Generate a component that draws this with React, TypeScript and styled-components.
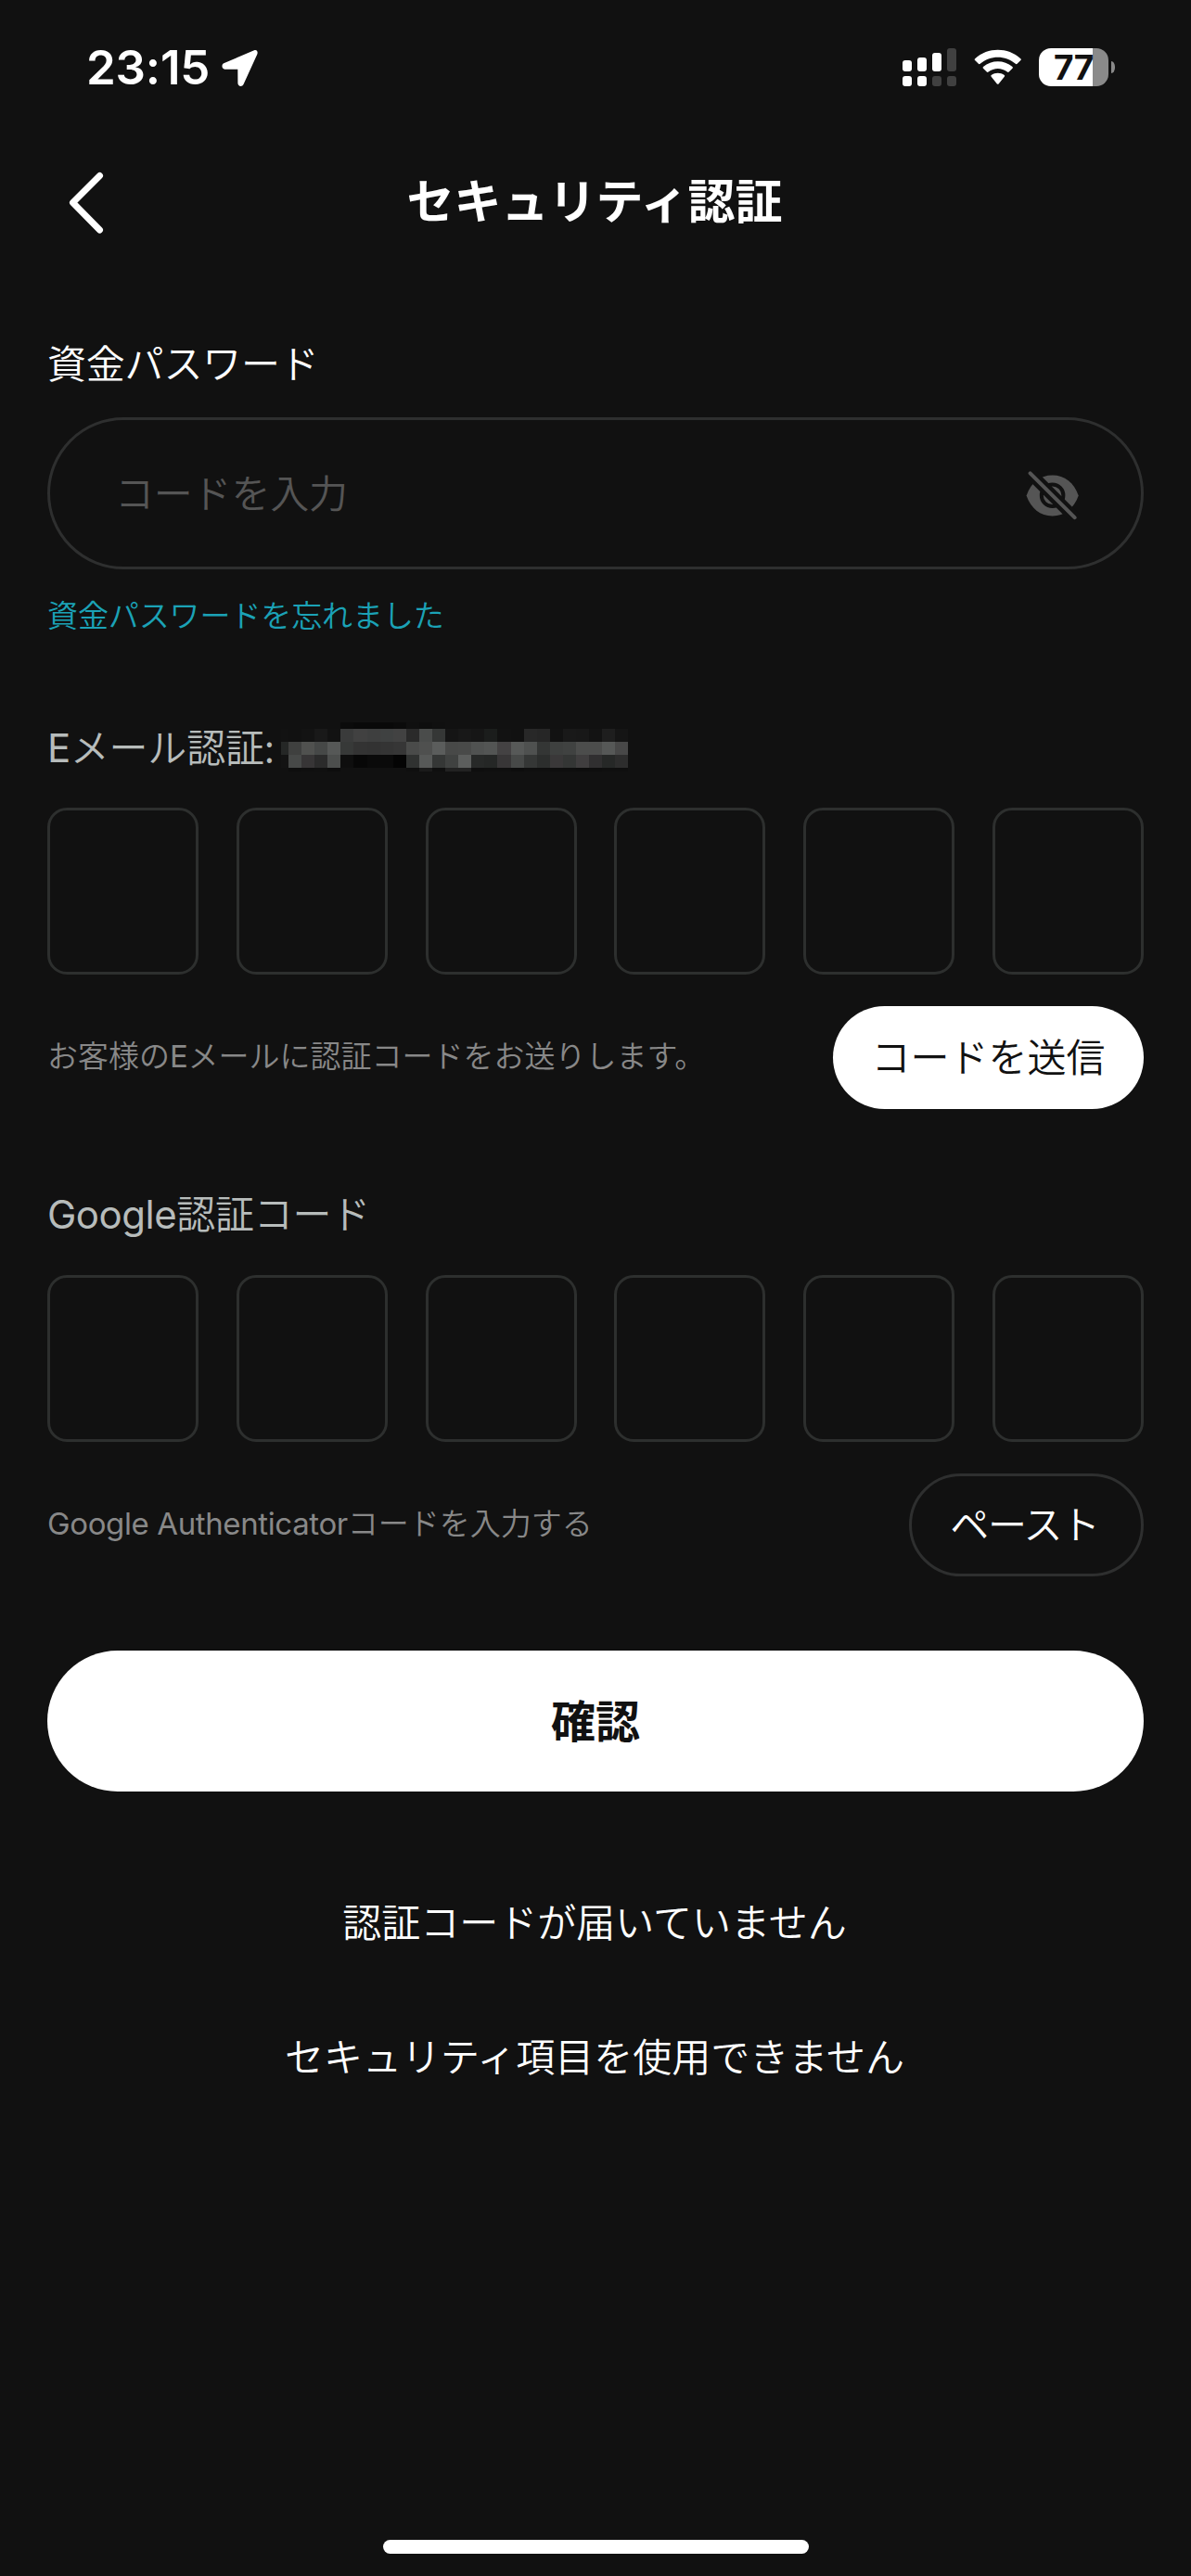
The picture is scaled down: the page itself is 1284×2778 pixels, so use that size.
import React from "react";
import styled, { createGlobalStyle } from "styled-components";

const GlobalStyle = createGlobalStyle`
  *, *::before, *::after { box-sizing: border-box; }
  html, body { margin: 0; padding: 0; background: #111111; }
  button { margin: 0; padding: 0; border: 0; background: none; font: inherit; color: inherit; }
`;

const Screen = styled.main`
  display: flex;
  flex-direction: column;
  width: 1284px;
  height: 2778px;
  overflow: hidden;
  background: #111111;
  color: #ffffff;
  font-family: "Noto Sans CJK JP", "Noto Sans", sans-serif;
  font-weight: 350;
`;

const StatusBar = styled.div`
  display: flex;
  align-items: flex-start;
  justify-content: space-between;
  height: 141px;
  padding: 52px 82px 0 93px;
`;

const Clock = styled.div`
  display: flex;
  align-items: flex-start;
  gap: 14px;
  height: 42px;
`;

const Time = styled.span`
  width: 132px;
  font-family: Inter, sans-serif;
  font-size: 51px;
  font-weight: 600;
  line-height: 42px;
  letter-spacing: -0.2px;
  white-space: nowrap;
`;

const Indicators = styled.div`
  display: flex;
  align-items: flex-start;
`;

const SignalIcon = styled.svg`
  width: 58px;
  height: 42px;
  margin-right: 19px;
`;

const WifiIcon = styled.svg`
  width: 52px;
  height: 42px;
  margin-right: 18px;
`;

const Battery = styled.div`
  display: flex;
  align-items: center;
  gap: 3px;
`;

const BatteryBody = styled.div`
  display: flex;
  align-items: center;
  justify-content: center;
  width: 75px;
  height: 41px;
  border-radius: 13px;
  background: linear-gradient(90deg, #ffffff 58px, #8a8a8a 58px);
  color: #111111;
  font-family: Inter, sans-serif;
  font-size: 37px;
  font-weight: 700;
  line-height: 41px;
  letter-spacing: -0.3px;
`;

const BatteryNub = styled.span`
  width: 4px;
  height: 13px;
  border-radius: 0 4px 4px 0 / 0 6px 6px 0;
  background: #8a8a8a;
`;

const NavBar = styled.header`
  display: grid;
  grid-template-columns: 160px 1fr 162px;
  align-items: center;
  height: 147px;
`;

const BackButton = styled.button`
  display: flex;
  height: 80px;
  padding: 8px 0 0 71px;
`;

const Title = styled.h1`
  margin: 0;
  padding-bottom: 2px;
  font-size: 51px;
  font-weight: 700;
  line-height: 72px;
  text-align: center;
  white-space: nowrap;
`;

const Form = styled.div`
  display: flex;
  flex-direction: column;
  padding: 72px 51px 0;
`;

const Label = styled.label<{ $muted?: boolean; $mt?: number }>`
  display: flex;
  height: 60px;
  margin-top: ${(p) => p.$mt ?? 0}px;
  color: ${(p) => (p.$muted ? "#b7bcbb" : "#ffffff")};
  font-size: 42px;
  line-height: 60px;
  letter-spacing: -0.2px;
  white-space: nowrap;
`;

const LabelText = styled.span`
  width: 242px;
  margin-top: -2px;
`;

const Latin = styled.span<{ $tracking: number }>`
  font-family: Inter, sans-serif;
  font-weight: 400;
  line-height: 1;
  letter-spacing: ${(p) => p.$tracking}px;
`;

const PasswordField = styled.div`
  display: flex;
  align-items: center;
  justify-content: space-between;
  height: 164px;
  margin-top: 30px;
  padding: 0 66px 0 70px;
  border: 3px solid #2e2f2f;
  border-radius: 82px;
`;

const Placeholder = styled.span`
  padding-bottom: 5px;
  color: #555555;
  font-size: 42px;
  line-height: 60px;
  letter-spacing: -0.2px;
`;

const ForgotLink = styled.a`
  margin-top: 24px;
  color: #1ba2b6;
  font-size: 33px;
  line-height: 48px;
  letter-spacing: -0.1px;
`;

const CodeRow = styled.div<{ $mt: number }>`
  display: flex;
  justify-content: space-between;
  margin-top: ${(p) => p.$mt}px;
`;

const CodeBox = styled.div`
  width: 163px;
  height: 180px;
  border: 3px solid #2d2f2e;
  border-radius: 21px;
`;

const HintRow = styled.div`
  display: flex;
  align-items: center;
  justify-content: space-between;
  height: 111px;
  margin-top: 34px;
`;

const Hint = styled.p`
  margin: 0;
  padding-bottom: 8px;
  color: #888888;
  font-size: 33px;
  line-height: 48px;
  white-space: nowrap;
`;

const PillButton = styled.button<{ $solid?: boolean }>`
  width: ${(p) => (p.$solid ? 335 : 253)}px;
  height: 111px;
  padding-bottom: 5px;
  border: ${(p) => (p.$solid ? "0" : "3px solid #2e2f2f")};
  border-radius: 56px;
  background: ${(p) => (p.$solid ? "#ffffff" : "transparent")};
  color: ${(p) => (p.$solid ? "#111111" : "#ffffff")};
  font-size: 42px;
  line-height: 60px;
  letter-spacing: ${(p) => (p.$solid ? "0" : "-1.4px")};
  padding-right: ${(p) => (p.$solid ? 0 : 4)}px;
  white-space: nowrap;
`;

const ConfirmButton = styled.button`
  height: 152px;
  margin-top: 80px;
  padding-bottom: 6px;
  border-radius: 76px;
  background: #ffffff;
  color: #111111;
  font-size: 48px;
  font-weight: 700;
`;

const HelpLinks = styled.nav`
  display: flex;
  flex-direction: column;
  align-items: center;
  gap: 85px;
  margin-top: 109px;
  padding-right: 2px;
  font-size: 42px;
  line-height: 60px;
`;

const HomeArea = styled.div`
  display: flex;
  justify-content: center;
  margin-top: auto;
  padding-bottom: 24px;
`;

const HomeIndicator = styled.span`
  width: 459px;
  height: 15px;
  border-radius: 8px;
  background: #ffffff;
`;

const Mosaic = styled.span`
  display: grid;
  grid-template-columns: 7.7px repeat(26, 14.1px);
  grid-template-rows: 7px 14px 14px 14px 4px;
  margin: 3px 0 0 10.3px;
`;

const Tile = styled.i<{ $tone: string }>`
  background: #${(p) => p.$tone};
`;

/* Tones of the pixelated address, one line per row of tiles. */
const tones = [
  "111 111 111 111 111 0b0b0b 090909 090909 090909 0b0b0b 101010 0e0e0e 101010 111 111 111 111 111 111 111 111 111 111 111 111 111 111",
  "121212 111 131313 191919 121212 3a3b3b 414141 3e3f3f 3f4141 424242 2a2a2a 4a4c4b 353736 151515 181818 161616 1b1d1c 121212 111 282828 262626 121212 191919 181818 131313 1e1e1e 151515",
  "252726 3f403f 50514f 464847 565857 373938 333 323232 343434 363636 4a4b4a 4f504f 5b5d5c 484948 494a49 505251 535554 444243 575958 4f5150 343635 3e403f 404241 4c4d4c 4c4d4c 565857 484848",
  "131313 474948 373536 2b2b2b 4c4e4d 0e0e0e 070707 0a0a0a 0a0a0a 040404 303231 575958 353736 404241 5c5e5d 272928 252726 383637 474948 353736 2c2e2d 3a3839 343635 403e3f 302f30 262827 2d2d2d",
  "111 0e0e0e 0f0f0f 101010 0d0d0d 111 111 111 111 111 0f0f0f 1a1a1a 0f0f0f 222 222 0e0e0e 0f0f0f 0f0f0f 0d0d0d 0f0f0f 0f0f0f 0e0e0e 0e0e0e 0d0d0d 0e0e0e 0f0f0f 0f0f0f",
].map((row) => row.split(" "));

const MaskedEmail = () => (
  <Mosaic>
    {tones.flatMap((row, r) => row.map((tone, c) => <Tile key={`${r}-${c}`} $tone={tone} />))}
  </Mosaic>
);

const CodeBoxes = ({ mt }: { mt: number }) => (
  <CodeRow $mt={mt}>
    {Array.from({ length: 6 }, (_, i) => (
      <CodeBox key={i} />
    ))}
  </CodeRow>
);

const LocationArrow = () => (
  <svg width="40" height="42" viewBox="0 0 40 42" fill="#fff">
    <path d="M35 2.300 L2.200 16.200 C-0.500 17.400 0 22.600 3.300 22.700 L17.300 22.800 L17.400 37.800 C17.500 41.500 22.200 41.900 23.500 38.900 L38.200 6.800 C39.500 3.800 37.800 1.100 35 2.300 Z" />
  </svg>
);

const Signal = () => (
  <SignalIcon viewBox="0 0 58 42" fill="#fff">
    <rect x="0" y="13" width="10" height="12" rx="3" />
    <rect x="16" y="10" width="10" height="15" rx="3" />
    <rect x="32" y="5" width="10" height="20" rx="3" />
    <rect x="48" y="0" width="10" height="25" rx="3" fill="#404040" />
    <rect x="0" y="30" width="10" height="11" rx="3" />
    <rect x="16" y="30" width="10" height="11" rx="3" />
    <rect x="32" y="30" width="10" height="11" rx="3" fill="#404040" />
    <rect x="48" y="30" width="10" height="11" rx="3" fill="#404040" />
  </SignalIcon>
);

const Wifi = () => (
  <WifiIcon viewBox="0 0 52 42" fill="#fff">
    <path d="M1.200 11.200 C15 -1.400 36.500 -1.400 50.300 11.200 Q51.300 12.100 50.400 13 L46.600 16.800 Q45.700 17.600 44.800 16.800 C34 7.300 17.500 7.300 6.700 16.800 Q5.800 17.600 4.900 16.800 L1.100 13 Q0.200 12.100 1.200 11.200 Z" />
    <path d="M10 20 C19 12.300 32.500 12.300 41.500 20 Q42.400 20.900 41.500 21.800 L37.700 25.600 Q36.800 26.400 35.900 25.600 C30 20.800 21.500 20.800 15.600 25.600 Q14.700 26.400 13.800 25.600 L10 21.800 Q9.100 20.900 10 20 Z" />
    <path d="M18.700 29 C22.900 25.900 28.600 25.900 32.800 29 Q33.700 29.800 32.800 30.700 L26.600 38.400 Q25.750 39.200 24.900 38.400 L18.700 30.700 Q17.800 29.800 18.700 29 Z" />
  </WifiIcon>
);

const BackChevron = () => (
  <svg width="44" height="72" viewBox="0 0 44 72" fill="none" stroke="#fff" strokeWidth="7" strokeLinecap="round" strokeLinejoin="round">
    <path d="M36.500 6.500 L7.500 35.500 L36.500 65" />
  </svg>
);

const EyeIcon = styled.svg`
  width: 58px;
  height: 53px;
  margin-top: 5px;
`;

const EyeOff = () => (
  <EyeIcon viewBox="0 0 58 53">
    <path d="M0.600 26.400 C5.500 12.500 15.500 4.500 28.600 4.500 C41.700 4.500 51.700 12.500 56.700 26.400 C51.700 40.300 41.700 48.400 28.600 48.400 C15.500 48.400 5.500 40.300 0.600 26.400 Z" fill="#555" />
    <circle cx="28.600" cy="26.300" r="11.800" fill="#555" stroke="#111" strokeWidth="4" />
    <path d="M-1 -3.300 L58 55.700" stroke="#111" strokeWidth="12.800" />
    <path d="M4.600 2.300 L52.600 50.200" stroke="#555" strokeWidth="4" strokeLinecap="round" />
  </EyeIcon>
);

export default function App() {
  return (
    <>
      <GlobalStyle />
      <Screen lang="ja">
        <StatusBar>
          <Clock>
            <Time>23:15</Time>
            <LocationArrow />
          </Clock>
          <Indicators>
            <Signal />
            <Wifi />
            <Battery>
              <BatteryBody>77</BatteryBody>
              <BatteryNub />
            </Battery>
          </Indicators>
        </StatusBar>

        <NavBar>
          <BackButton aria-label="戻る">
            <BackChevron />
          </BackButton>
          <Title>セキュリティ認証</Title>
        </NavBar>

        <Form>
          <Label>資金パスワード</Label>
          <PasswordField>
            <Placeholder>コードを入力</Placeholder>
            <EyeOff />
          </PasswordField>
          <ForgotLink>資金パスワードを忘れました</ForgotLink>

          <Label $muted $mt={90}>
            <LabelText><Latin $tracking={-0.5}>E</Latin>メール認証:</LabelText>
            <MaskedEmail />
          </Label>
          <CodeBoxes mt={35} />
          <HintRow>
            <Hint>お客様の<Latin $tracking={-0.3}>E</Latin>メールに認証コードをお送りします。</Hint>
            <PillButton $solid>コードを送信</PillButton>
          </HintRow>

          <Label $muted $mt={83}>
            <LabelText><Latin $tracking={-0.5}>Google</Latin>認証コード</LabelText>
          </Label>
          <CodeBoxes mt={36} />
          <HintRow>
            <Hint><Latin $tracking={-0.38}>Google Authenticator</Latin>コードを入力する</Hint>
            <PillButton>ペースト</PillButton>
          </HintRow>

          <ConfirmButton>確認</ConfirmButton>
        </Form>

        <HelpLinks>
          <span>認証コードが届いていません</span>
          <span>セキュリティ項目を使用できません</span>
        </HelpLinks>

        <HomeArea>
          <HomeIndicator />
        </HomeArea>
      </Screen>
    </>
  );
}
